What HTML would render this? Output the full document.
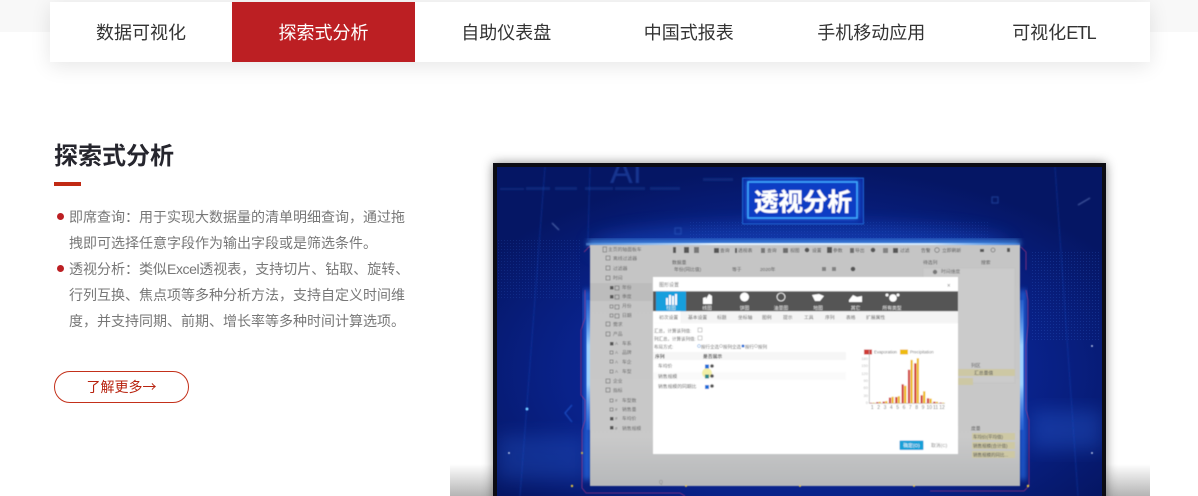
<!DOCTYPE html>
<html lang="zh"><head><meta charset="utf-8"><title>探索式分析</title>
<style>
*{box-sizing:border-box;margin:0;padding:0}
html,body{width:1198px;height:496px;overflow:hidden;background:#fff}
body{position:relative;font-family:"Liberation Sans","Noto Sans CJK SC",sans-serif}
.band{position:absolute;left:0;top:0;width:1198px;height:32px;background:#f8f8f8}
.nav{position:absolute;left:50px;top:2px;width:1100px;height:60px;background:#fff;box-shadow:0 4px 20px rgba(0,0,0,.1);display:flex}
.nav div{width:182.5px;height:60px;line-height:62px;text-align:center;font-size:18px;color:#333}
.nav div:first-child{width:182px}
.nav div.on{width:183px;background:#bc1f23;color:#fff}
h2{position:absolute;left:54px;top:140px;font-size:24px;line-height:34px;font-weight:700;color:#26262e}
.rule{position:absolute;left:54px;top:182px;width:27px;height:4px;background:#c12a14}
.p{position:absolute;left:69px;width:345px;font-size:14px;line-height:26px;color:#777}
.dot{position:absolute;left:57px;width:7px;height:7px;border-radius:50%;background:#bc1f23}
.btn{position:absolute;left:54px;top:371px;width:135px;height:32px;border:1px solid #c3301a;border-radius:16px;text-align:center;line-height:30px;font-size:14px;color:#b8230f}
.btn span{font-family:"Noto Sans CJK JP",sans-serif}
.fade{position:absolute;left:450px;top:464px;width:700px;height:32px;background:linear-gradient(rgba(180,180,180,0),#b4b4b4)}
svg{position:absolute;left:0;top:0}
.frame{position:absolute;left:493px;top:163px;width:613px;height:340px;background:#0c0c14;box-shadow:0 0 10px rgba(0,0,0,.45)}
</style></head><body>
<div class="band"></div>
<div class="nav"><div>数据可视化</div><div class="on">探索式分析</div><div>自助仪表盘</div><div>中国式报表</div><div>手机移动应用</div><div>可视化<span style="letter-spacing:-1.3px">ETL</span></div></div>
<h2>探索式分析</h2><div class="rule"></div>
<span class="dot" style="top:213px"></span>
<div class="p" style="top:204px">即席查询：用于实现大数据量的清单明细查询，通过拖<br>拽即可选择任意字段作为输出字段或是筛选条件。</div>
<span class="dot" style="top:265px"></span>
<div class="p" style="top:256px">透视分析：类似<span style="letter-spacing:-.4px">Excel</span>透视表，支持切片、钻取、旋转、<br>行列互换、焦点项等多种分析方法，支持自定义时间维<br>度，并支持同期、前期、增长率等多种时间计算选项。</div>
<div class="btn">了解更多<span>→</span></div>
<div class="fade"></div>
<div class="frame"></div>
<svg width="1198" height="496" viewBox="0 0 1198 496" font-family="Liberation Sans,Noto Sans CJK SC,sans-serif">
<defs>
<radialGradient id="bg" cx="50%" cy="62%" r="62%"><stop offset="0" stop-color="#0b2ea6"/><stop offset=".62" stop-color="#09228a"/><stop offset="1" stop-color="#051664"/></radialGradient>
<linearGradient id="pn" x1="0" y1="0" x2="0" y2="1"><stop offset="0" stop-color="#c5c5c5"/><stop offset=".8" stop-color="#c9c9c9"/><stop offset="1" stop-color="#b6b8ba"/></linearGradient>
<linearGradient id="gl" x1="0" y1="0" x2="0" y2="1"><stop offset="0" stop-color="#5aa8ff" stop-opacity=".2"/><stop offset=".35" stop-color="#9fd2ff"/><stop offset=".65" stop-color="#9fd2ff"/><stop offset="1" stop-color="#3a80f0" stop-opacity=".3"/></linearGradient>
<linearGradient id="gt" x1="0" y1="0" x2="1" y2="0"><stop offset="0" stop-color="#7fc0ff" stop-opacity=".4"/><stop offset=".3" stop-color="#e6f4ff"/><stop offset=".8" stop-color="#cfe8ff"/><stop offset="1" stop-color="#5aa8ff" stop-opacity=".4"/></linearGradient>
<pattern id="dots" width="3" height="3" patternUnits="userSpaceOnUse"><rect width="1" height="1" fill="#3f78e8"/></pattern>
<clipPath id="cp"><rect x="497" y="167" width="605" height="329"/></clipPath>
<filter id="b1"><feGaussianBlur stdDeviation=".45"/></filter>
<filter id="b2" x="-30%" y="-30%" width="160%" height="160%"><feGaussianBlur stdDeviation="3"/></filter>
<filter id="b5" x="-30%" y="-30%" width="160%" height="160%"><feGaussianBlur stdDeviation="9"/></filter>
<filter id="b3"><feGaussianBlur stdDeviation=".9"/></filter>
</defs>
<g clip-path="url(#cp)">
<rect x="497" y="167" width="605" height="329" fill="url(#bg)"/>
<ellipse cx="800" cy="245" rx="210" ry="22" fill="#1c52d0" opacity=".45" filter="url(#b5)"/>
<rect x="497" y="240" width="85" height="60" fill="url(#dots)" opacity=".16"/>
<rect x="1030" y="250" width="70" height="90" fill="url(#dots)" opacity=".2"/>
<rect x="690" y="222" width="300" height="18" fill="url(#dots)" opacity=".14"/>
<rect x="497" y="435" width="90" height="45" fill="#2a62d8" opacity=".3" filter="url(#b5)"/>
<rect x="1030" y="410" width="72" height="40" fill="#2a62d8" opacity=".35" filter="url(#b5)"/>
<g filter="url(#b3)">
<text x="610" y="183" font-size="34" fill="#163590">AI</text>
<g fill="#143288" opacity=".6"><rect x="500" y="188" width="24" height="2"/><rect x="526" y="187" width="24" height="3"/><rect x="555" y="187" width="22" height="3"/><rect x="585" y="187" width="28" height="3"/><rect x="615" y="187" width="30" height="3"/><rect x="650" y="187" width="30" height="3"/><rect x="703" y="178" width="30" height="3"/></g>
<g stroke="#1c50c8" stroke-width="1" opacity=".35"><line x1="545" y1="167" x2="520" y2="496"/><line x1="590" y1="167" x2="588" y2="240"/><line x1="1055" y1="167" x2="1078" y2="496"/></g>
<line x1="552" y1="223" x2="559" y2="230" stroke="#7f9ad8" opacity=".7"/>
<line x1="1078" y1="205" x2="1090" y2="198" stroke="#7f9ad8" opacity=".7"/>
<rect x="675" y="228" width="6" height="6" fill="none" stroke="#3a68cc" opacity=".5"/>
<rect x="992" y="197" width="6" height="6" fill="none" stroke="#3a68cc" opacity=".5"/>
<path d="M572 405L565 413L572 422" fill="none" stroke="#1f56d0"/>
</g>
</g>
<!-- panel glow -->
<rect x="588" y="240" width="432" height="6" fill="#5ab0ff" opacity=".7" filter="url(#b2)"/>
<rect x="584" y="290" width="6" height="190" fill="#2f7fff" opacity=".7" filter="url(#b2)"/>
<rect x="1020" y="290" width="6" height="190" fill="#2f7fff" opacity=".7" filter="url(#b2)"/>
<g filter="url(#b1)">
<rect x="586" y="243" width="434" height="2.500" fill="url(#gt)"/>
<rect x="586.500" y="300" width="3.500" height="130" fill="url(#gl)"/>
<rect x="1020" y="300" width="3.500" height="130" fill="url(#gl)"/>
<path d="M584 252L590 246M581 330L585 318V290M581 330V395L585 400V420L582 430V488L586 493H680L685 496" stroke="#b8347f" stroke-width=".8" fill="none" opacity=".75"/>
<path d="M1021 247L1026 252V270M1026 290L1028 300V325L1026 345V410L1029 420V486L1024 491H930" stroke="#b8347f" stroke-width=".8" fill="none" opacity=".75"/>
<rect x="590" y="245" width="430" height="241" fill="url(#pn)"/>
<rect x="590" y="283" width="62" height="18" fill="#bcbcbc"/>
<!-- title badge -->
<rect x="742.500" y="178" width="121" height="46" fill="#0a2aa0" stroke="#2070e0" stroke-width=".8"/>
<rect x="747" y="181" width="111" height="38" fill="#2a80ff" filter="url(#b2)" opacity=".8"/>
<rect x="748" y="182" width="109" height="36" fill="#0a3ec4" stroke="#3ca8ff" stroke-width="1.500"/>
<text x="754" y="210.500" font-size="24.500" font-weight="700" fill="#fff" stroke="#fff" stroke-width=".4" textLength="98">透视分析</text>
<!-- left tree -->
<g font-size="4.800" fill="#666">
<text x="608" y="251">主页的轴面板车</text><text x="613" y="260">离线过滤器</text><text x="613" y="270">过滤器</text><text x="613" y="279.500">时间</text><text x="622" y="289">年份</text><text x="622" y="298">季度</text><text x="622" y="307.500">月份</text><text x="622" y="317">日期</text><text x="613" y="326">需求</text><text x="613" y="335.500">产品</text><text x="622" y="345">车系</text><text x="622" y="354">品牌</text><text x="622" y="363.500">车企</text><text x="622" y="373">车型</text><text x="613" y="382.500">企业</text><text x="613" y="392">指标</text><text x="622" y="402">车型数</text><text x="622" y="411">销售量</text><text x="622" y="420">车均价</text><text x="622" y="430">销售规模</text>
</g>
<g fill="none" stroke="#777" stroke-width=".7">
<rect x="603" y="247" width="3.500" height="5"/><rect x="606" y="256" width="4" height="4"/><rect x="606" y="266" width="4" height="4"/><rect x="606" y="276" width="4" height="4"/><rect x="606" y="322" width="4" height="4"/><rect x="606" y="332" width="4" height="4"/><rect x="606" y="379" width="4" height="4"/><rect x="606" y="388" width="4" height="4"/>
<rect x="610" y="305" width="3" height="3"/><rect x="610" y="314" width="3" height="3"/><rect x="610" y="351" width="3" height="3"/><rect x="610" y="360" width="3" height="3"/><rect x="610" y="370" width="3" height="3"/><rect x="610" y="399" width="3" height="3"/><rect x="610" y="408" width="3" height="3"/>
<rect x="615" y="286" width="4" height="4"/><rect x="615" y="295" width="4" height="4"/><rect x="615" y="305" width="4" height="4"/><rect x="615" y="314" width="4" height="4"/>
</g>
<g fill="#555"><rect x="610" y="286" width="3.500" height="3.500"/><rect x="610" y="295" width="3.500" height="3.500"/><rect x="610" y="342" width="3.500" height="3.500"/><rect x="610" y="417" width="3.500" height="3.500"/><rect x="610" y="426" width="3.500" height="3.500"/></g>
<g font-size="4.500" fill="#777"><text x="615" y="345">A</text><text x="615" y="354">A</text><text x="615" y="363.500">A</text><text x="615" y="373">A</text><text x="615" y="402">#</text><text x="615" y="411">#</text><text x="615" y="420">#</text><text x="615" y="430">#</text></g>
<!-- toolbar -->
<g font-size="4.800" fill="#555">
<text x="720" y="252">查询</text><text x="738" y="252">透视表</text><text x="767" y="252">查询</text><text x="790" y="252">视图</text><text x="812" y="252">设置</text><text x="833" y="252">参数</text><text x="855" y="252">导出</text><text x="900" y="252">过滤</text><text x="921" y="252">告警</text><text x="942" y="252">立即刷新</text>
<text x="672" y="264">数据量</text><text x="674" y="271">年份(同比值)</text><text x="732" y="271">等于</text><text x="760" y="271">2020年</text><text x="923" y="264">待选列</text><text x="981" y="264">搜索</text>
</g>
<g fill="#555">
<rect x="673" y="247" width="3" height="6"/><rect x="684" y="247" width="5" height="6"/><rect x="694" y="247" width="5" height="6" opacity=".7"/><rect x="714" y="248" width="5" height="5"/><rect x="735" y="248" width="2" height="5"/><rect x="761" y="248" width="4" height="5" opacity=".7"/><rect x="783" y="248" width="5" height="5" opacity=".8"/><circle cx="807" cy="250" r="2.300"/><rect x="827" y="247" width="5" height="6"/><rect x="850" y="248" width="4" height="5" opacity=".8"/><circle cx="873" cy="250" r="2.300"/><rect x="883" y="248" width="5" height="5" opacity=".6"/><rect x="893" y="248" width="5" height="5"/><circle cx="937" cy="250" r="2.300" fill="none" stroke="#555" stroke-width=".6"/><rect x="980" y="249" width="4" height="3"/><circle cx="993" cy="250" r="2" fill="none" stroke="#555" stroke-width=".6"/><rect x="1007" y="248" width="3" height="4"/><circle cx="853" cy="269" r="2.300"/><rect x="822" y="267" width="4" height="4" opacity=".6"/><rect x="832" y="267" width="4" height="4" opacity=".6"/>
</g>
<rect x="923" y="268" width="92" height="115" fill="#cbcbcb" stroke="#bdbdbd" stroke-width=".5"/>
<text x="941" y="273" font-size="4.800" fill="#666">时间维度</text>
<circle cx="935" cy="272" r="2.200" fill="#777"/>
<text x="971" y="367" font-size="4.800" fill="#555">列区</text>
<rect x="972" y="369" width="43" height="7" fill="#cdc8a4"/><text x="974" y="374.500" font-size="4.800" fill="#555">汇总量值</text>
<text x="971" y="430" font-size="4.800" fill="#555">度量</text>
<rect x="972" y="433" width="43" height="7" fill="#cdc8a4"/><text x="973" y="438.500" font-size="4.500" fill="#555">车均价(平均值)</text>
<rect x="972" y="442" width="43" height="7" fill="#cdc8a4"/><text x="973" y="447.500" font-size="4.500" fill="#555">销售规模(合计值)</text>
<rect x="972" y="451" width="43" height="7" fill="#cdc8a4"/><text x="973" y="456.500" font-size="4.500" fill="#555">销售规模的同比...</text>
<rect x="958" y="369" width="15" height="7" fill="#cdc8a4"/><rect x="958" y="378" width="15" height="7" fill="#cdc8a4"/>
<!-- dialog -->
<rect x="653" y="277" width="305" height="177" fill="#fff"/>
<text x="659" y="286.500" font-size="5" fill="#777">图形设置</text>
<text x="947" y="287.500" font-size="6" fill="#777">×</text>
<rect x="653" y="291.300" width="305" height="20" fill="#555"/>
<rect x="656" y="291.300" width="30" height="20" fill="#129fdd"/>
<g fill="#fff">
<rect x="666" y="298" width="2" height="7"/><rect x="669" y="295" width="2" height="10"/><rect x="672" y="296" width="2" height="9"/><rect x="675" y="294" width="2" height="11"/>
<path d="M703 304V298L706 297V299L709 294L712 296V304Z"/>
<circle cx="744.500" cy="297" r="4.500"/>
<circle cx="781" cy="297" r="4" fill="none" stroke="#fff" stroke-width=".8"/>
<path d="M812 295L819 294L824 296L820 301L815 301Z"/>
<path d="M849 300L853 295L857 297L862 296V302H849Z"/>
<circle cx="893" cy="298" r="3.800"/><circle cx="887" cy="295" r="1.500"/><circle cx="898" cy="295" r="1.500"/>
</g>
<g font-size="4.800" fill="#eee" text-anchor="middle"><text x="671" y="309.500">柱图</text><text x="707" y="309.500">线图</text><text x="744.500" y="309.500">饼图</text><text x="781" y="309.500">油量图</text><text x="818" y="309.500">地图</text><text x="855.500" y="309.500">其它</text><text x="892" y="309.500">所有类型</text></g>
<rect x="653" y="311.300" width="305" height="12" fill="#f4f4f4"/>
<rect x="653" y="311.300" width="27.500" height="12" fill="#fff"/>
<g font-size="4.800" fill="#666"><text x="659" y="319">初次设置</text><text x="688" y="319">基本设置</text><text x="717" y="319">标题</text><text x="738" y="319">坐标轴</text><text x="762" y="319">图例</text><text x="783" y="319">提示</text><text x="804" y="319">工具</text><text x="825" y="319">序列</text><text x="846" y="319">表格</text><text x="866" y="319">扩展属性</text></g>
<g font-size="4.500" fill="#666"><text x="654" y="332.500">汇总，计算该列值:</text><text x="654" y="340.500">列汇总，计算该列值:</text><text x="654" y="348.500">布局方式:</text><text x="701" y="348.500">按行全选</text><text x="723" y="348.500">按列全选</text><text x="745" y="348.500">按行</text><text x="758" y="348.500">按列</text></g>
<rect x="698" y="328" width="4" height="4" fill="#fff" stroke="#999" stroke-width=".5"/><rect x="698" y="336" width="4" height="4" fill="#fff" stroke="#999" stroke-width=".5"/>
<circle cx="699" cy="346" r="1.500" fill="#fff" stroke="#3b8fe0" stroke-width=".5"/><circle cx="721" cy="346" r="1.500" fill="#fff" stroke="#888" stroke-width=".5"/><circle cx="743" cy="346" r="1.500" fill="#1d6fd8"/><circle cx="756" cy="346" r="1.500" fill="#fff" stroke="#888" stroke-width=".5"/>
<rect x="653" y="352" width="193" height="8" fill="#f6f6f6"/>
<rect x="653" y="372" width="193" height="8" fill="#fafafa"/>
<text x="655" y="358" font-size="4.800" font-weight="700" fill="#555">序列</text><text x="703" y="358" font-size="4.800" font-weight="700" fill="#555">是否展示</text>
<g font-size="4.800" fill="#666"><text x="658" y="367.500">车均价</text><text x="658" y="378">销售规模</text><text x="658" y="388">销售规模的同期比</text></g>
<circle cx="707" cy="373" r="5" fill="#eeea80" opacity=".7"/>
<rect x="705" y="364.500" width="4" height="4" fill="#1d6fd8"/><rect x="705" y="374.500" width="4" height="4" fill="#2a8a8a"/><rect x="705" y="385" width="4" height="4" fill="#1d6fd8"/>
<circle cx="712" cy="366" r="1.800" fill="#555"/><circle cx="712" cy="376" r="1.800" fill="#555"/><circle cx="712" cy="386" r="1.800" fill="#555"/>
<!-- chart -->
<rect x="864" y="349.500" width="8" height="5" fill="#d03a35"/><text x="874" y="353.500" font-size="4.300" fill="#777">Evaporation</text>
<rect x="900" y="349.500" width="8" height="5" fill="#eebb11"/><text x="910" y="353.500" font-size="4.300" fill="#777">Precipitation</text>
<g font-size="4" fill="#bbb" text-anchor="end"><text x="868" y="360">180</text><text x="868" y="367">150</text><text x="868" y="375">120</text><text x="868" y="382">90</text><text x="868" y="389">60</text><text x="868" y="397">30</text><text x="868" y="404">0</text></g>
<path d="M869.300 350V403.300H945" stroke="#aaa" stroke-width=".7" fill="none"/>
<g fill="#d03a35"><rect x="869.900" y="402.800" width="2.200" height=".5"/><rect x="876.200" y="402.100" width="2.200" height="1.200"/><rect x="882.600" y="401.600" width="2.200" height="1.700"/><rect x="888.900" y="397.600" width="2.200" height="5.700"/><rect x="895.200" y="397" width="2.200" height="6.300"/><rect x="901.550" y="384.300" width="2.200" height="19"/><rect x="907.900" y="369.800" width="2.200" height="33.500"/><rect x="914.200" y="363.300" width="2.200" height="40"/><rect x="920.500" y="395.300" width="2.200" height="8"/><rect x="926.900" y="398.300" width="2.200" height="5"/><rect x="933.200" y="401.700" width="2.200" height="1.600"/><rect x="939.500" y="402.500" width="2.200" height=".8"/></g>
<g fill="#eebb11"><rect x="872.500" y="402.700" width="2.200" height=".6"/><rect x="878.800" y="401.800" width="2.200" height="1.500"/><rect x="885.200" y="401.100" width="2.200" height="2.200"/><rect x="891.500" y="396.800" width="2.200" height="6.500"/><rect x="897.800" y="396.200" width="2.200" height="7.100"/><rect x="904.150" y="385.800" width="2.200" height="17.500"/><rect x="910.500" y="359.900" width="2.200" height="43.400"/><rect x="916.800" y="358.300" width="2.200" height="45"/><rect x="923.100" y="391.300" width="2.200" height="12"/><rect x="929.500" y="398.700" width="2.200" height="4.600"/><rect x="935.800" y="401.800" width="2.200" height="1.500"/><rect x="942.100" y="402.700" width="2.200" height=".6"/></g>
<g font-size="5" fill="#777" text-anchor="middle"><text x="872.300" y="409">1</text><text x="878.600" y="409">2</text><text x="885" y="409">3</text><text x="891.300" y="409">4</text><text x="897.600" y="409">5</text><text x="904" y="409">6</text><text x="910.300" y="409">7</text><text x="916.600" y="409">8</text><text x="923" y="409">9</text><text x="929.300" y="409">10</text><text x="935.600" y="409">11</text><text x="942" y="409">12</text></g>
<rect x="899.500" y="440.500" width="24" height="9.500" rx="1" fill="#16a0d8"/>
<text x="911.500" y="447" font-size="4.800" fill="#fff" text-anchor="middle">确定(O)</text>
<text x="931" y="447" font-size="4.800" fill="#888">取消(C)</text>
<text x="659" y="484" font-size="5" fill="#888">Q</text>
<g fill="#e8c840"><circle cx="582" cy="453" r="1"/><circle cx="572" cy="486" r="1.200"/><circle cx="686" cy="486" r="1"/><circle cx="800" cy="486" r="1"/><circle cx="914" cy="486" r="1"/><circle cx="1028" cy="486" r="1.200"/></g>
<g fill="#dfeaff"><circle cx="509" cy="453" r=".9"/><circle cx="1092" cy="453" r=".9"/><circle cx="1092" cy="346" r=".9"/><circle cx="527" cy="409" r="1.500" fill="#6fc8ff"/></g>
</g>
</svg>
</body></html>
